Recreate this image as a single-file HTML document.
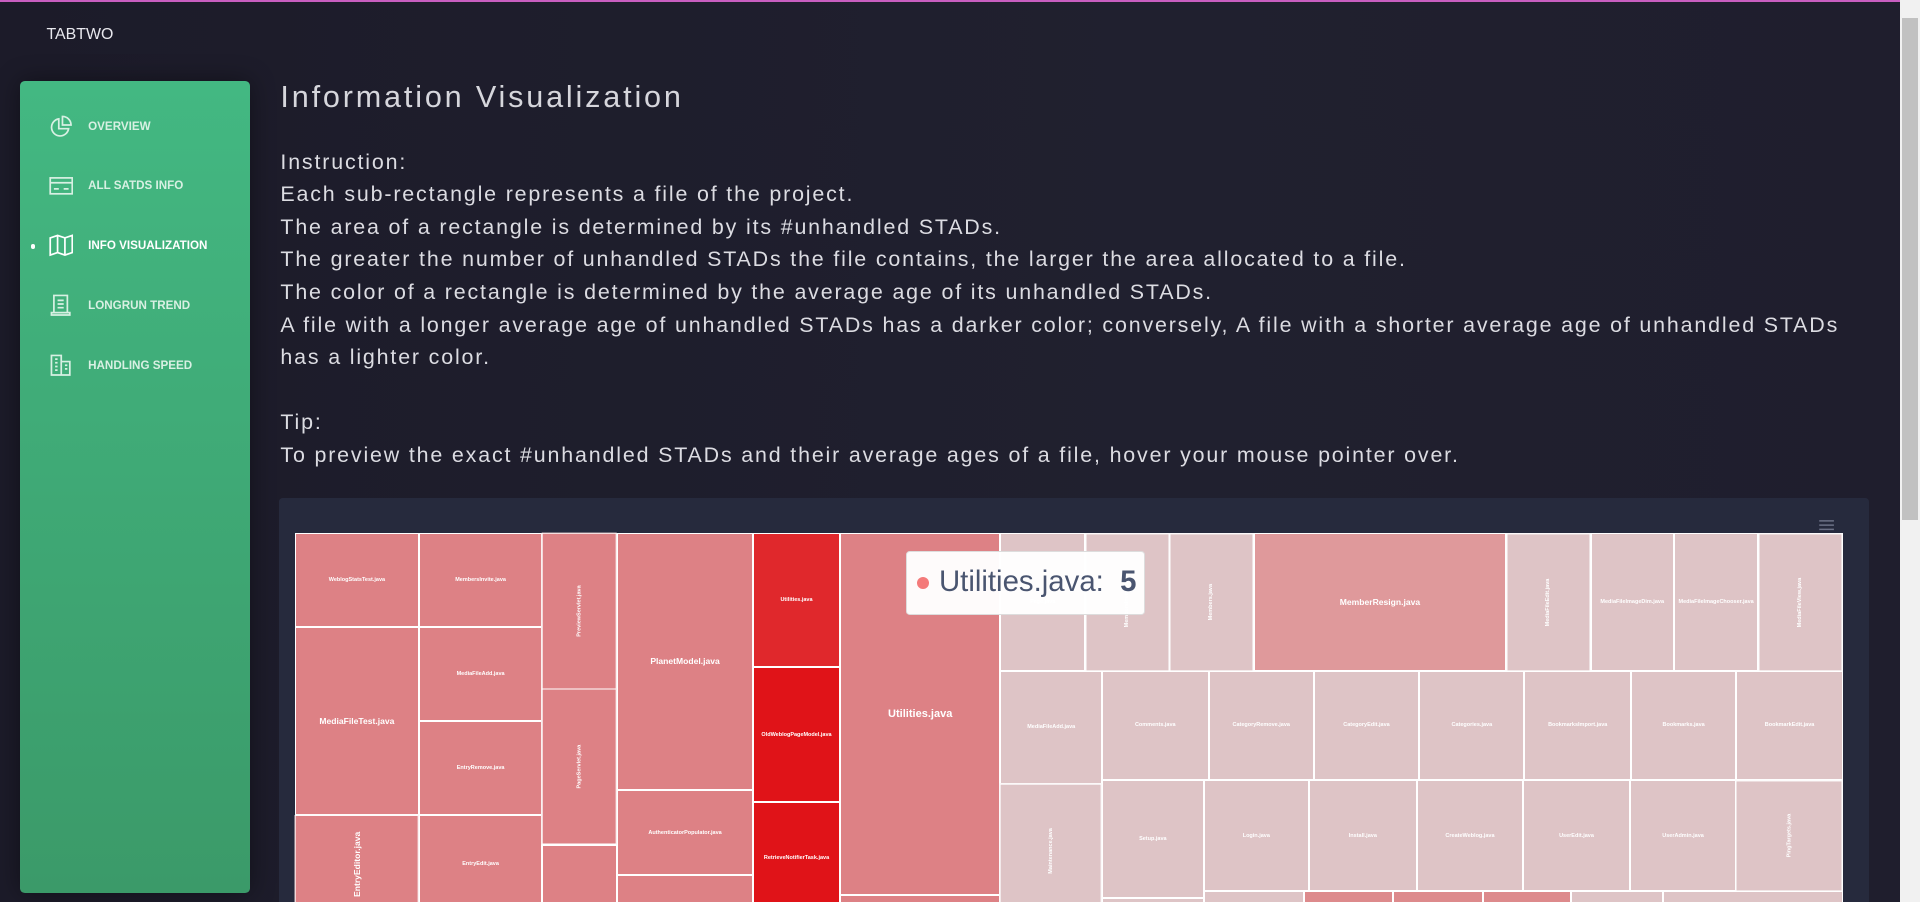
<!DOCTYPE html>
<html><head><meta charset="utf-8">
<style>
html,body{margin:0;padding:0;width:1920px;height:902px;overflow:hidden;background:#1f1e2d;}
#w{zoom:1.22449;width:1568px;height:737px;position:relative;font-family:"Liberation Sans",sans-serif;background:linear-gradient(90deg,#1c1b29 0,#20202f 60%,#1f1e2d);overflow:hidden;}
.top{position:absolute;left:0;top:0;width:1568px;height:2px;background:#c85ec0;}
.brand{position:absolute;left:38px;top:21px;color:#e8e8ee;font-size:13px;}
.side{position:absolute;left:16px;top:66px;width:188px;height:663px;border-radius:4px;background:linear-gradient(180deg,#43b882,#3b9a69);box-shadow:0 0 20px rgba(0,0,0,.4);}
.mi{position:absolute;left:0;height:20px;width:188px;color:#d8f0e3;font-size:9.5px;font-weight:bold;}
.mi svg{position:absolute;left:24px;top:0;}
.mi span{position:absolute;left:56px;top:5px;}
.mi.act{color:#fff}
.dot{position:absolute;left:9px;top:9px;width:4px;height:4px;border-radius:50%;background:#fff;}
h1{position:absolute;left:229px;top:65px;margin:0;font-weight:normal;font-size:25px;letter-spacing:2.3px;color:#d6d6dc;}
.txt{position:absolute;left:229px;top:119px;width:1290px;color:#dcdce2;font-size:17.5px;letter-spacing:1.5px;line-height:26.6px;}
.panel{position:absolute;left:228px;top:407px;width:1298px;height:340px;background:#262a3d;border-radius:3px;}
.tm{position:absolute;left:241px;top:435px;width:1264px;height:310px;background:#fff;}
.c{position:absolute;box-sizing:border-box;border:1px solid #fff;background:#dd8185;color:#fff;display:flex;align-items:center;justify-content:center;font-size:4.5px;font-weight:bold;text-align:center;overflow:hidden;white-space:nowrap;}
.l{background:#dec4c6}
.r{writing-mode:vertical-rl;transform:rotate(180deg);}
.tip{position:absolute;left:740px;top:450px;width:195px;height:52px;box-sizing:border-box;background:rgba(255,255,255,.97);border:1px solid #ddd;border-radius:3px;color:#4a5570;font-size:24px;}
.sb{position:absolute;left:1552px;top:0;width:16px;height:737px;background:#f1f1f1;}
.th{position:absolute;left:1553px;top:15px;width:13px;height:410px;background:#c1c1c1;}
</style></head><body><div id="w">
<div class="top"></div>
<div class="brand">TABTWO</div>
<div class="side">
 <div class="mi" style="top:27px"><svg width="20" height="20" viewBox="0 0 20 20" fill="none" stroke="#d8f0e3" stroke-width="1.4"><path d="M8 4a7 7 0 1 0 8 8H8z"/><path d="M11 2v7h7a7 7 0 0 0-7-7z"/></svg><span>OVERVIEW</span></div>
 <div class="mi" style="top:75px"><svg width="20" height="20" viewBox="0 0 20 20" fill="none" stroke="#d8f0e3" stroke-width="1.4"><rect x="1" y="4" width="18" height="13"/><path d="M1 8h18M4 13h4M12 13h4"/></svg><span>ALL SATDS INFO</span></div>
 <div class="mi act" style="top:124px"><div class="dot"></div><svg width="20" height="20" viewBox="0 0 20 20" fill="none" stroke="#fff" stroke-width="1.4"><path d="M1 4l6-2 6 2 6-2v14l-6 2-6-2-6 2z M7 2v14M13 4v14"/></svg><span>INFO VISUALIZATION</span></div>
 <div class="mi" style="top:173px"><svg width="20" height="20" viewBox="0 0 20 20" fill="none" stroke="#d8f0e3" stroke-width="1.4"><path d="M4 2h11v14H4z M2 16h15v2H2z M7 6h5M7 9h5M7 12h5"/></svg><span>LONGRUN TREND</span></div>
 <div class="mi" style="top:222px"><svg width="20" height="20" viewBox="0 0 20 20" fill="none" stroke="#d8f0e3" stroke-width="1.4"><path d="M2 2h8v16H2z M10 7h7v11h-7 M5 5h2M5 8h2M5 11h2M5 14h2M13 10h2M13 13h2"/></svg><span>HANDLING SPEED</span></div>
</div>
<h1>Information Visualization</h1>
<div class="txt">Instruction:<br>Each sub-rectangle represents a file of the project.<br>The area of a rectangle is determined by its #unhandled STADs.<br>The greater the number of unhandled STADs the file contains, the larger the area allocated to a file.<br>The color of a rectangle is determined by the average age of its unhandled STADs.<br>A file with a longer average age of unhandled STADs has a darker color; conversely, A file with a shorter average age of unhandled STADs<br>has a lighter color.<br><br>Tip:<br>To preview the exact #unhandled STADs and their average ages of a file, hover your mouse pointer over.</div>
<div class="panel"><svg style="position:absolute;left:1257px;top:17px" width="14" height="10"><path d="M1 1.5h12M1 5h12M1 8.5h12" stroke="#6b7085" stroke-width="1.2"/></svg></div>
<div class="tm">
<div class="c" style="left:0;top:0;width:101px;height:77px">WeblogStatsTest.java</div>
<div class="c" style="left:0;top:77px;width:101px;height:154px;font-size:7px">MediaFileTest.java</div>
<div class="c r" style="left:0;top:231px;width:101px;height:80px;font-size:7px">EntryEditor.java</div>
<div class="c" style="left:101px;top:0;width:101px;height:77px">MembersInvite.java</div>
<div class="c" style="left:101px;top:77px;width:101px;height:77px">MediaFileAdd.java</div>
<div class="c" style="left:101px;top:154px;width:101px;height:77px">EntryRemove.java</div>
<div class="c" style="left:101px;top:231px;width:101px;height:80px">EntryEdit.java</div>
<div class="c r" style="left:202px;top:0;width:61px;height:128px">PreviewServlet.java</div>
<div class="c r" style="left:202px;top:128px;width:61px;height:127px">PageServlet.java</div>
<div class="c" style="left:202px;top:255px;width:61px;height:56px"></div>
<div class="c" style="left:263px;top:0;width:111px;height:210px;font-size:7px">PlanetModel.java</div>
<div class="c" style="left:263px;top:210px;width:111px;height:70px">AuthenticatorPopulator.java</div>
<div class="c" style="left:263px;top:280px;width:111px;height:31px"></div>
<div class="c" style="left:374px;top:0;width:71px;height:110px;background:#e0282c">Utilities.java</div>
<div class="c" style="left:374px;top:110px;width:71px;height:110px;background:#e01318">OldWeblogPageModel.java</div>
<div class="c" style="left:374px;top:220px;width:71px;height:91px;background:#e01318">RetrieveNotifierTask.java</div>
<div class="c" style="left:445px;top:0;width:131px;height:296px;font-size:9px">Utilities.java</div>
<div class="c" style="left:445px;top:296px;width:131px;height:15px"></div>
<div class="c l" style="left:576px;top:0;width:69px;height:113px">Page.java</div>
<div class="c l r" style="left:645px;top:0;width:69px;height:113px">MembersInvite.java</div>
<div class="c l r" style="left:714px;top:0;width:69px;height:113px">Members.java</div>
<div class="c" style="left:783px;top:0;width:206px;height:113px;background:#df999b;font-size:7px">MemberResign.java</div>
<div class="c l r" style="left:989px;top:0;width:69px;height:113px">MediaFileEdit.java</div>
<div class="c l" style="left:1058px;top:0;width:68px;height:113px">MediaFileImageDim.java</div>
<div class="c l" style="left:1126px;top:0;width:69px;height:113px">MediaFileImageChooser.java</div>
<div class="c l r" style="left:1195px;top:0;width:69px;height:113px">MediaFileView.java</div>
<div class="c l" style="left:576px;top:113px;width:83px;height:92px">MediaFileAdd.java</div>
<div class="c l" style="left:659px;top:113px;width:87px;height:89px">Comments.java</div>
<div class="c l" style="left:746px;top:113px;width:86px;height:89px">CategoryRemove.java</div>
<div class="c l" style="left:832px;top:113px;width:86px;height:89px">CategoryEdit.java</div>
<div class="c l" style="left:918px;top:113px;width:86px;height:89px">Categories.java</div>
<div class="c l" style="left:1004px;top:113px;width:87px;height:89px">BookmarksImport.java</div>
<div class="c l" style="left:1091px;top:113px;width:86px;height:89px">Bookmarks.java</div>
<div class="c l" style="left:1177px;top:113px;width:87px;height:89px">BookmarkEdit.java</div>
<div class="c l r" style="left:576px;top:205px;width:83px;height:110px">Maintenance.java</div>
<div class="c l" style="left:659px;top:202px;width:83px;height:96px">Setup.java</div>
<div class="c l" style="left:742px;top:202px;width:86px;height:91px">Login.java</div>
<div class="c l" style="left:828px;top:202px;width:88px;height:91px">Install.java</div>
<div class="c l" style="left:916px;top:202px;width:87px;height:91px">CreateWeblog.java</div>
<div class="c l" style="left:1003px;top:202px;width:87px;height:91px">UserEdit.java</div>
<div class="c l" style="left:1090px;top:202px;width:87px;height:91px">UserAdmin.java</div>
<div class="c l r" style="left:1177px;top:202px;width:87px;height:91px">PingTargets.java</div>
<div class="c l" style="left:659px;top:298px;width:83px;height:20px"></div>
<div class="c l" style="left:742px;top:293px;width:82px;height:20px"></div>
<div class="c" style="left:824px;top:293px;width:73px;height:20px;background:#dd8a8c"></div>
<div class="c" style="left:897px;top:293px;width:73px;height:20px;background:#dd8a8c"></div>
<div class="c" style="left:970px;top:293px;width:72px;height:20px;background:#dd8a8c"></div>
<div class="c l" style="left:1042px;top:293px;width:75px;height:20px"></div>
<div class="c l" style="left:1117px;top:293px;width:147px;height:20px"></div>
</div>
<div class="tip"><span style="position:absolute;left:8px;top:20px;width:10px;height:10px;border-radius:50%;background:#f47a7a"></span><span style="position:absolute;left:26px;top:11px">Utilities.java:&nbsp; <b>5</b></span></div>
<div class="sb"></div><div class="th"></div>
</div></body></html>
